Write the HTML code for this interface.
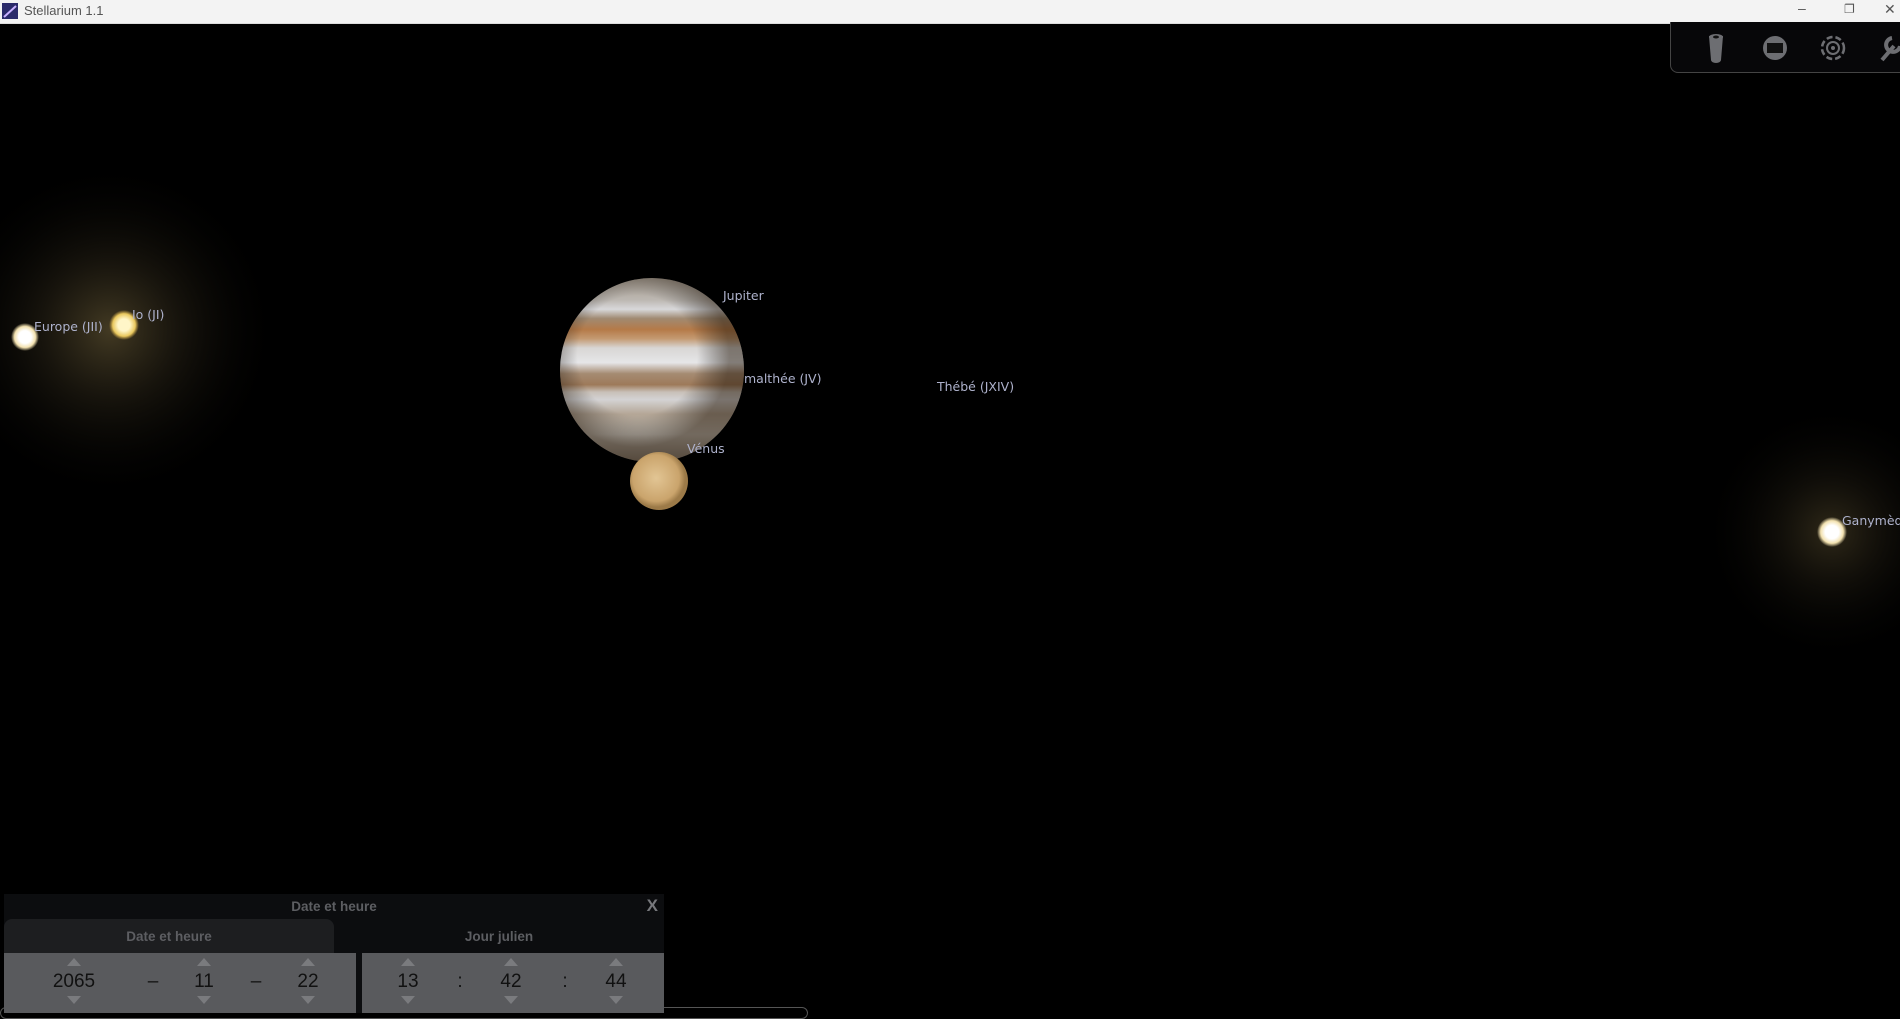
<!DOCTYPE html>
<html><head><meta charset="utf-8"><style>
body{margin:0;width:1900px;height:1013px;background:#000;overflow:hidden;position:relative;font-family:"DejaVu Sans","Liberation Sans",sans-serif}
.tb{position:absolute;left:0;top:0;width:1900px;height:23px;background:#f3f3f3;border-bottom:1px solid #ddd}
.tb span{position:absolute;left:24px;top:3px;font-size:13px;color:#555;font-family:"Liberation Sans",sans-serif}
.lbl{position:absolute;color:#aeb2cc;font-size:12.5px;white-space:nowrap}
.dlg{position:absolute;left:4px;top:894px;width:660px;height:119px;background:#0c0d0f;font-family:"Liberation Sans",sans-serif;font-weight:bold;color:#5d5e62}
.spin{position:absolute;top:59px;height:60px;background:#595a5d}
.num{position:absolute;top:77px;font-size:19px;color:#111;font-weight:normal;transform:translateX(-50%)}
.up,.dn{position:absolute;width:0;height:0;border-left:7px solid transparent;border-right:7px solid transparent;transform:translateX(-50%)}
.up{top:64px;border-bottom:8px solid #7a7b7e}.dn{top:102px;border-top:8px solid #7a7b7e}
</style></head><body>
<div class="tb"><svg style="position:absolute;left:2px;top:3px" width="16" height="16"><rect width="16" height="16" fill="#2a2a6a"/><path d="M2 14 L14 3" stroke="#c8b0ff" stroke-width="2"/></svg><span>Stellarium 1.1</span>
<span style="left:1798px;top:0;font-size:14px">–</span><span style="left:1844px;top:2px;font-size:12px">❐</span><span style="left:1884px;top:1px;font-size:14px">✕</span></div>
<div style="position:absolute;left:1670px;top:22px;width:240px;height:50px;background:#070709;border:1px solid #444;border-top:none;border-radius:0 0 0 8px"></div>
<svg style="position:absolute;left:1670px;top:22px" width="230" height="52">
<path d="M39 14 h14 l-2 24 a5 3 0 0 1 -10 0z" fill="#6d6e72"/><ellipse cx="46" cy="15" rx="7" ry="3" fill="#6d6e72"/><ellipse cx="46" cy="15" rx="3" ry="1.5" fill="#111"/>
<circle cx="105" cy="26" r="12" fill="#6d6e72"/><rect x="97" y="21" width="16" height="10" fill="#111"/>
<circle cx="163" cy="26" r="11" fill="none" stroke="#6d6e72" stroke-width="2.5" stroke-dasharray="6 3"/><circle cx="163" cy="26" r="6" fill="none" stroke="#6d6e72" stroke-width="2"/><circle cx="163" cy="26" r="2" fill="#6d6e72"/>
<path d="M212 38 L224 24 M222 16 a7 7 0 1 0 8 8" stroke="#6d6e72" stroke-width="4" fill="none"/>
</svg>
<svg style="position:absolute;left:0;top:0" width="1900" height="1013">
<defs>
<radialGradient id="glow"><stop offset="0" stop-color="#7a6a40" stop-opacity=".55"/><stop offset=".4" stop-color="#3a3220" stop-opacity=".4"/><stop offset="1" stop-color="#000" stop-opacity="0"/></radialGradient>
<radialGradient id="star"><stop offset=".45" stop-color="#fff"/><stop offset=".75" stop-color="#f3e2b0"/><stop offset="1" stop-color="#f3e2b0" stop-opacity="0"/></radialGradient>
<radialGradient id="io"><stop offset=".4" stop-color="#fff6c8"/><stop offset=".75" stop-color="#e9c85e"/><stop offset="1" stop-color="#c9a040" stop-opacity="0"/></radialGradient>
<linearGradient id="jup" x1="0" y1="0" x2="0" y2="1">
<stop offset="0" stop-color="#a49a8e"/><stop offset=".12" stop-color="#bdb8b2"/><stop offset=".17" stop-color="#d8d8da"/><stop offset=".22" stop-color="#a08a72"/><stop offset=".28" stop-color="#b57a48"/><stop offset=".33" stop-color="#c49a72"/><stop offset=".38" stop-color="#d8d6d4"/><stop offset=".46" stop-color="#e6e6e8"/><stop offset=".52" stop-color="#a58b72"/><stop offset=".58" stop-color="#9e7a5a"/><stop offset=".62" stop-color="#c8c0b8"/><stop offset=".66" stop-color="#d4d3d4"/><stop offset=".74" stop-color="#b4a696"/><stop offset=".85" stop-color="#c6bfb5"/><stop offset="1" stop-color="#8a7e70"/></linearGradient>
<radialGradient id="shade" cx=".42" cy=".42"><stop offset=".65" stop-color="#000" stop-opacity="0"/><stop offset="1" stop-color="#201408" stop-opacity=".5"/></radialGradient>
<radialGradient id="ven" cx=".45" cy=".45"><stop offset="0" stop-color="#e2c594"/><stop offset=".8" stop-color="#caa46c"/><stop offset="1" stop-color="#9c7a48"/></radialGradient>
</defs>
<circle cx="110" cy="330" r="170" fill="url(#glow)"/>
<circle cx="1831" cy="532" r="130" fill="url(#glow)" opacity=".7"/>
<circle cx="25" cy="337" r="14" fill="url(#star)"/>
<circle cx="124" cy="325" r="15" fill="url(#io)"/>
<circle cx="1832" cy="532" r="15" fill="url(#star)"/>
<circle cx="652" cy="370" r="92" fill="url(#jup)"/><circle cx="652" cy="370" r="92" fill="url(#shade)"/>
<circle cx="659" cy="481" r="29" fill="url(#ven)"/>
</svg>
<div class="lbl" style="left:34px;top:319px">Europe (JII)</div>
<div class="lbl" style="left:132px;top:307px">Io (JI)</div>
<div class="lbl" style="left:723px;top:288px">Jupiter</div>
<div class="lbl" style="left:744px;top:371px">malthée (JV)</div>
<div class="lbl" style="left:937px;top:379px">Thébé (JXIV)</div>
<div class="lbl" style="left:687px;top:441px">Vénus</div>
<div class="lbl" style="left:1842px;top:513px">Ganymède</div>
<div style="position:absolute;left:0;top:1007px;width:806px;height:10px;border:1px solid #555;border-radius:6px"></div>
<div class="dlg">
<div style="position:absolute;left:0;width:660px;top:5px;text-align:center;font-size:13.5px">Date et heure</div>
<div style="position:absolute;right:6px;top:2px;font-size:17px;color:#77787c">X</div>
<div style="position:absolute;left:0;top:25px;width:330px;height:34px;background:#1d1e20;border-radius:8px 8px 0 0"></div>
<div style="position:absolute;left:0;width:330px;top:35px;text-align:center;font-size:13.5px">Date et heure</div>
<div style="position:absolute;left:330px;width:330px;top:35px;text-align:center;font-size:13.5px">Jour julien</div>
<div class="spin" style="left:0;width:352px"></div><div class="spin" style="left:358px;width:302px"></div>
<div class="num" style="left:70px">2065</div><div class="up" style="left:70px"></div><div class="dn" style="left:70px"></div>
<div class="num" style="left:149px">–</div>
<div class="num" style="left:200px">11</div><div class="up" style="left:200px"></div><div class="dn" style="left:200px"></div>
<div class="num" style="left:252px">–</div>
<div class="num" style="left:304px">22</div><div class="up" style="left:304px"></div><div class="dn" style="left:304px"></div>
<div class="num" style="left:404px">13</div><div class="up" style="left:404px"></div><div class="dn" style="left:404px"></div>
<div class="num" style="left:456px">:</div>
<div class="num" style="left:507px">42</div><div class="up" style="left:507px"></div><div class="dn" style="left:507px"></div>
<div class="num" style="left:561px">:</div>
<div class="num" style="left:612px">44</div><div class="up" style="left:612px"></div><div class="dn" style="left:612px"></div>
</div>
</body></html>
